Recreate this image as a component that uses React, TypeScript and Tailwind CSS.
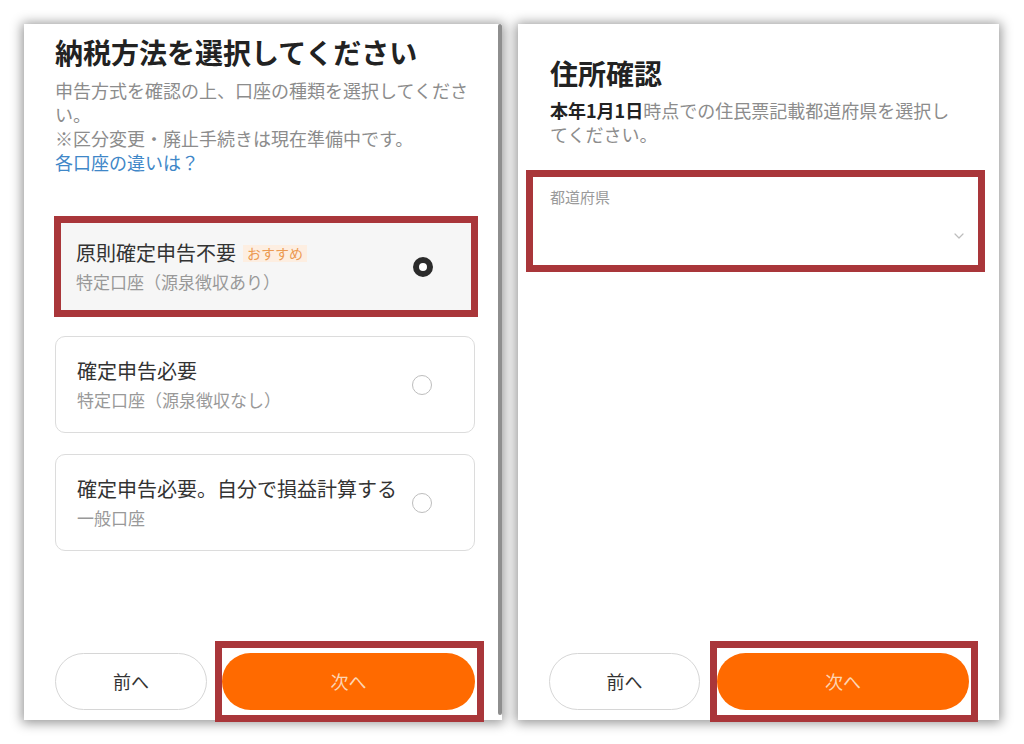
import React from 'react';

const font = { fontFamily: '"Noto Sans CJK JP", "Noto Sans", sans-serif' };

interface OptionCardProps {
  title: string;
  sub: string;
  selected?: boolean;
  badge?: string;
}

const OptionCard: React.FC<OptionCardProps> = ({ title, sub, selected = false, badge }) => (
  <div
    className={`relative h-[97px] rounded-[10px] flex items-center pl-[21px] pr-[42px] ${
      selected ? 'bg-[#f6f6f6]' : 'bg-white border border-[#dcdcdc]'
    }`}
  >
    <div className="flex-1 flex flex-col gap-[3px]">
      <div className="flex items-center text-[20px] leading-[28px] text-[#333]">
        <span>{title}</span>
        {badge && (
          <span className="ml-[7px] px-[4px] h-[17px] flex items-center bg-[#fdeee1] text-[#ec9a52] text-[14px] leading-[17px]">
            {badge}
          </span>
        )}
      </div>
      <div className="text-[17px] leading-[24px] text-[#999]">{sub}</div>
    </div>
    {selected ? (
      <div className="w-[20px] h-[20px] rounded-full border-[6px] border-[#2b2b2b] bg-white shrink-0" />
    ) : (
      <div className="w-[20px] h-[20px] rounded-full border-[1.5px] border-[#bdbdbd] bg-white shrink-0" />
    )}
    {selected && (
      <div className="absolute -left-[1px] -right-[3px] -top-[2px] -bottom-[2px] border-[7px] border-[#a9363a] pointer-events-none" />
    )}
  </div>
);

const NavButtons: React.FC<{ prevW: string; nextW: string; gap: string }> = ({ prevW, nextW, gap }) => (
  <div className={`flex ${gap}`}>
    <button className={`${prevW} h-[57px] rounded-full border border-[#d6d6d6] bg-white text-[18px] text-[#333]`}>
      前へ
    </button>
    <div className="relative">
      <button className={`${nextW} h-[57px] rounded-full bg-[#ff6a00] text-[18px] text-[#fdd5b4]`}>
        次へ
      </button>
      <div className="absolute -left-[7px] -right-[9px] -top-[12px] -bottom-[12px] border-[7px] border-[#a9363a] pointer-events-none" />
    </div>
  </div>
);

export default function App() {
  return (
    <div className="w-[1024px] h-[744px] bg-white overflow-hidden" style={font}>
      <div className="flex pl-[24px] pt-[24px] gap-[16px]">
        {/* Left screen */}
        <div className="w-[478px] h-[696px] flex bg-white shadow-[0_1px_11px_2px_rgba(0,0,0,0.42)]">
          <div className="flex-1 flex flex-col pl-[31px] pr-[23px] pt-[10px] pb-[10px]">
            <h1 className="text-[28px] leading-[36px] font-bold text-[#222]">納税方法を選択してください</h1>
            <p className="mt-[8px] text-[18px] leading-[24px] text-[#8c8c8c]">
              申告方式を確認の上、口座の種類を選択してくださ
              <br />
              い。
              <br />
              ※区分変更・廃止手続きは現在準備中です。
            </p>
            <a className="text-[18px] leading-[24px] text-[#3f87c8]">各口座の違いは？</a>

            <div className="mt-[44px] flex flex-col gap-[21px]">
              <OptionCard title="原則確定申告不要" sub="特定口座（源泉徴収あり）" selected badge="おすすめ" />
              <OptionCard title="確定申告必要" sub="特定口座（源泉徴収なし）" />
              <OptionCard title="確定申告必要。自分で損益計算する" sub="一般口座" />
            </div>

            <div className="mt-auto">
              <NavButtons prevW="w-[152px]" nextW="w-[253px]" gap="gap-[15px]" />
            </div>
          </div>
          <div className="w-[4px] h-[691px] rounded-full bg-[#8e8e8e]" />
        </div>

        {/* Right screen */}
        <div className="w-[481px] h-[696px] flex flex-col bg-white shadow-[0_1px_11px_2px_rgba(0,0,0,0.42)] pt-[31px] pb-[10px]">
          <h1 className="pl-[32px] text-[28px] leading-[36px] font-bold text-[#222]">住所確認</h1>
          <p className="pl-[32px] mt-[7px] text-[18px] leading-[24px] text-[#8c8c8c]">
            <span className="font-bold text-[#222]">本年1月1日</span>時点での住民票記載都道府県を選択し
            <br />
            てください。
          </p>

          <div className="mt-[24px] ml-[8px] w-[459px] h-[102px] border-[7px] border-[#a9363a] flex flex-col pl-[17px] pr-[14px] pt-[10px]">
            <span className="text-[15px] leading-[20px] text-[#9a9a9a]">都道府県</span>
            <div className="flex justify-end mt-[26px]">
              <svg width="10" height="6" viewBox="0 0 10 6" fill="none">
                <path d="M1 1l4 4 4-4" stroke="#bdbdbd" strokeWidth="1.2" strokeLinecap="round" strokeLinejoin="round" />
              </svg>
            </div>
          </div>

          <div className="mt-auto pl-[31px]">
            <NavButtons prevW="w-[151px]" nextW="w-[252px]" gap="gap-[17px]" />
          </div>
        </div>
      </div>
    </div>
  );
}
